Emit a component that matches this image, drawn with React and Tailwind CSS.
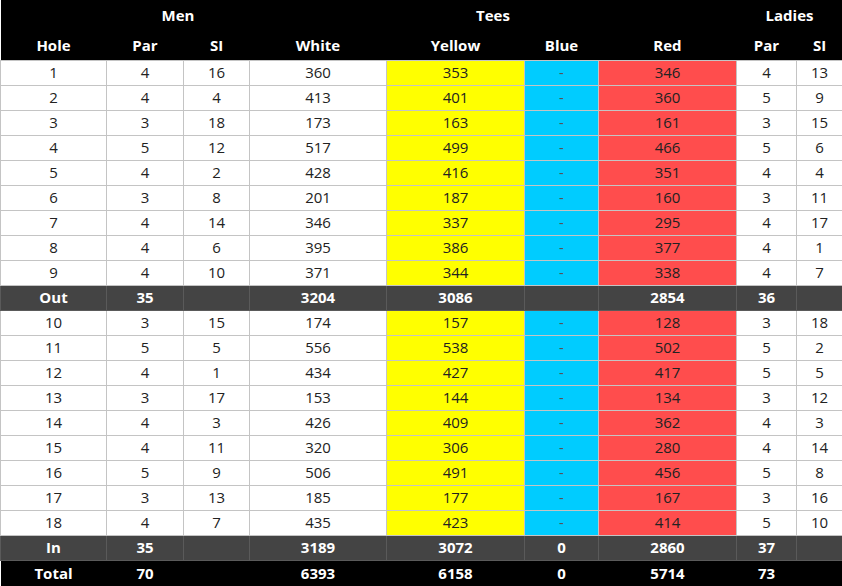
import React from 'react';

const front = [
    [1, 4, 16, 360, 353, 346, 4, 13],
    [2, 4, 4, 413, 401, 360, 5, 9],
    [3, 3, 18, 173, 163, 161, 3, 15],
    [4, 5, 12, 517, 499, 466, 5, 6],
    [5, 4, 2, 428, 416, 351, 4, 4],
    [6, 3, 8, 201, 187, 160, 3, 11],
    [7, 4, 14, 346, 337, 295, 4, 17],
    [8, 4, 6, 395, 386, 377, 4, 1],
    [9, 4, 10, 371, 344, 338, 4, 7],
];

const back = [
    [10, 3, 15, 174, 157, 128, 3, 18],
    [11, 5, 5, 556, 538, 502, 5, 2],
    [12, 4, 1, 434, 427, 417, 5, 5],
    [13, 3, 17, 153, 144, 134, 3, 12],
    [14, 4, 3, 426, 409, 362, 4, 3],
    [15, 4, 11, 320, 306, 280, 4, 14],
    [16, 5, 9, 506, 491, 456, 5, 8],
    [17, 3, 13, 185, 177, 167, 3, 16],
    [18, 4, 7, 435, 423, 414, 5, 10],
];

const cell = 'border border-[#c4c4c4] h-[25px] p-0 text-center';

const HoleRow = ({ r }) => (
    <tr className="text-[#222]">
        <td className={cell}>{r[0]}</td>
        <td className={cell}>{r[1]}</td>
        <td className={cell}>{r[2]}</td>
        <td className={cell}>{r[3]}</td>
        <td className={`${cell} bg-[#ffff00]`}>{r[4]}</td>
        <td className={`${cell} bg-[#00ccff] text-[#555]`}>-</td>
        <td className={`${cell} bg-[#ff4d4d]`}>{r[5]}</td>
        <td className={cell}>{r[6]}</td>
        <td className={cell}>{r[7]}</td>
    </tr>
);

const SumRow = ({ vals, dark }) => {
    const c = dark
        ? 'h-[26px] p-0 text-center bg-black'
        : 'h-[25px] p-0 text-center bg-[#444] border border-[#5a5a5a]';
    return (
        <tr className="text-white font-bold">
            {vals.map((v, i) => (
                <td key={i} className={c}>{v}</td>
            ))}
        </tr>
    );
};

export default function App() {
    return (
        <div className="w-[842px] h-[586px] overflow-hidden bg-white font-['Open_Sans',sans-serif] text-[15px]">
            <table className="w-[842px] table-fixed border-collapse">
                <colgroup>
                    <col className="w-[106px]" />
                    <col className="w-[77px]" />
                    <col className="w-[66px]" />
                    <col className="w-[137px]" />
                    <col className="w-[138px]" />
                    <col className="w-[74px]" />
                    <col className="w-[138px]" />
                    <col className="w-[60px]" />
                    <col className="w-[46px]" />
                </colgroup>
                <thead className="bg-black text-white font-bold">
                    <tr>
                        <th className="h-[30px] p-0"></th>
                        <th colSpan={2} className="h-[30px] p-0 text-center">Men</th>
                        <th colSpan={4} className="h-[30px] p-0 text-center">Tees</th>
                        <th colSpan={2} className="h-[30px] p-0 text-center">Ladies</th>
                    </tr>
                    <tr>
                        <th className="h-[30px] p-0 text-center">Hole</th>
                        <th className="h-[30px] p-0 text-center">Par</th>
                        <th className="h-[30px] p-0 text-center">SI</th>
                        <th className="h-[30px] p-0 text-center">White</th>
                        <th className="h-[30px] p-0 text-center">Yellow</th>
                        <th className="h-[30px] p-0 text-center">Blue</th>
                        <th className="h-[30px] p-0 text-center">Red</th>
                        <th className="h-[30px] p-0 text-center">Par</th>
                        <th className="h-[30px] p-0 text-center">SI</th>
                    </tr>
                </thead>
                <tbody>
                    {front.map((r) => <HoleRow key={r[0]} r={r} />)}
                    <SumRow vals={['Out', 35, '', 3204, 3086, '', 2854, 36, '']} />
                    {back.map((r) => <HoleRow key={r[0]} r={r} />)}
                    <SumRow vals={['In', 35, '', 3189, 3072, 0, 2860, 37, '']} />
                    <SumRow dark vals={['Total', 70, '', 6393, 6158, 0, 5714, 73, '']} />
                </tbody>
            </table>
        </div>
    );
}
